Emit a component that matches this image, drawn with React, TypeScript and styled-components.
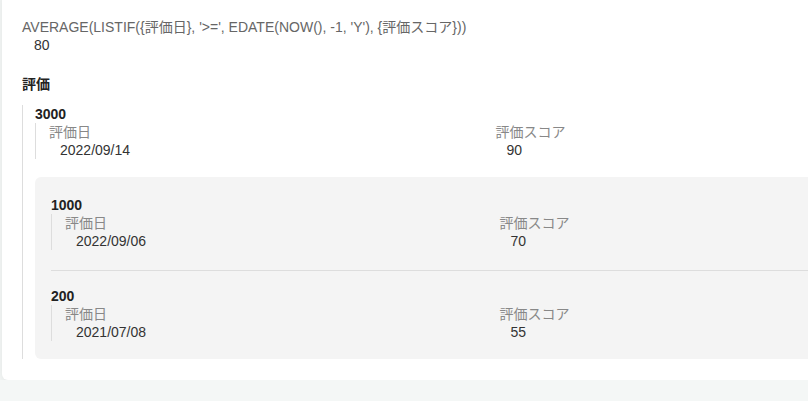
import React from 'react';
import styled, { createGlobalStyle } from 'styled-components';

const GlobalStyle = createGlobalStyle`
  html, body {
    margin: 0;
    padding: 0;
    background: #f4f7f6;
    overflow: hidden;
  }
  body {
    font-family: "Liberation Sans", "Noto Sans CJK JP", Arial, sans-serif;
    font-size: 14px;
    line-height: 18px;
    color: #333;
  }
`;

type Entry = { id: string; date: string; score: string };

const mainEntry: Entry = { id: '3000', date: '2022/09/14', score: '90' };
const nestedEntries: Entry[] = [
  { id: '1000', date: '2022/09/06', score: '70' },
  { id: '200', date: '2021/07/08', score: '55' },
];

const Card = styled.div`
  width: 920px;
  margin: -10px 0 0 2px;
  padding: 28px 20px 21px 20px;
  background: #fff;
  border-radius: 6px;
  box-shadow: 0 2px 8px rgba(0, 0, 0, 0.08);
`;

const Label = styled.div<{ tone?: string }>`
  color: ${({ tone }) => tone ?? '#888'};
`;

const Value = styled.div<{ indent?: number }>`
  padding-left: ${({ indent }) => indent ?? 11}px;
  color: #333;
`;

const SectionTitle = styled.div`
  margin-top: 21px;
  font-weight: bold;
  color: #222;
`;

const SectionBody = styled.div`
  margin-top: 12px;
  padding-left: 12px;
  border-left: 1px solid #ddd;
`;

const ItemTitle = styled.div`
  font-weight: bold;
  color: #222;
`;

const FieldGroup = styled.div`
  display: grid;
  grid-template-columns: 1fr 1fr;
  padding-left: 13px;
  border-left: 1px solid #ddd;
`;

const NestedBox = styled.div`
  margin-top: 18px;
  padding: 19px 8px 18px 16px;
  background: #f4f4f4;
  border-radius: 6px;
`;

const Divider = styled.div`
  height: 1px;
  background: #ddd;
  margin: 20px 0 16px 0;
`;

const Record = ({ entry }: { entry: Entry }) => (
  <div>
    <ItemTitle>{entry.id}</ItemTitle>
    <FieldGroup>
      <div>
        <Label>評価日</Label>
        <Value>{entry.date}</Value>
      </div>
      <div>
        <Label>評価スコア</Label>
        <Value>{entry.score}</Value>
      </div>
    </FieldGroup>
  </div>
);

export default function App() {
  return (
    <>
      <GlobalStyle />
      <Card>
        <Label tone="#666">
          AVERAGE(LISTIF({'{'}評価日{'}'}, '&gt;=', EDATE(NOW(), -1, 'Y'), {'{'}評価スコア{'}'}))
        </Label>
        <Value indent={12}>80</Value>
        <SectionTitle>評価</SectionTitle>
        <SectionBody>
          <Record entry={mainEntry} />
          <NestedBox>
            {nestedEntries.map((e, i) => (
              <React.Fragment key={e.id}>
                {i > 0 && <Divider />}
                <Record entry={e} />
              </React.Fragment>
            ))}
          </NestedBox>
        </SectionBody>
      </Card>
    </>
  );
}
